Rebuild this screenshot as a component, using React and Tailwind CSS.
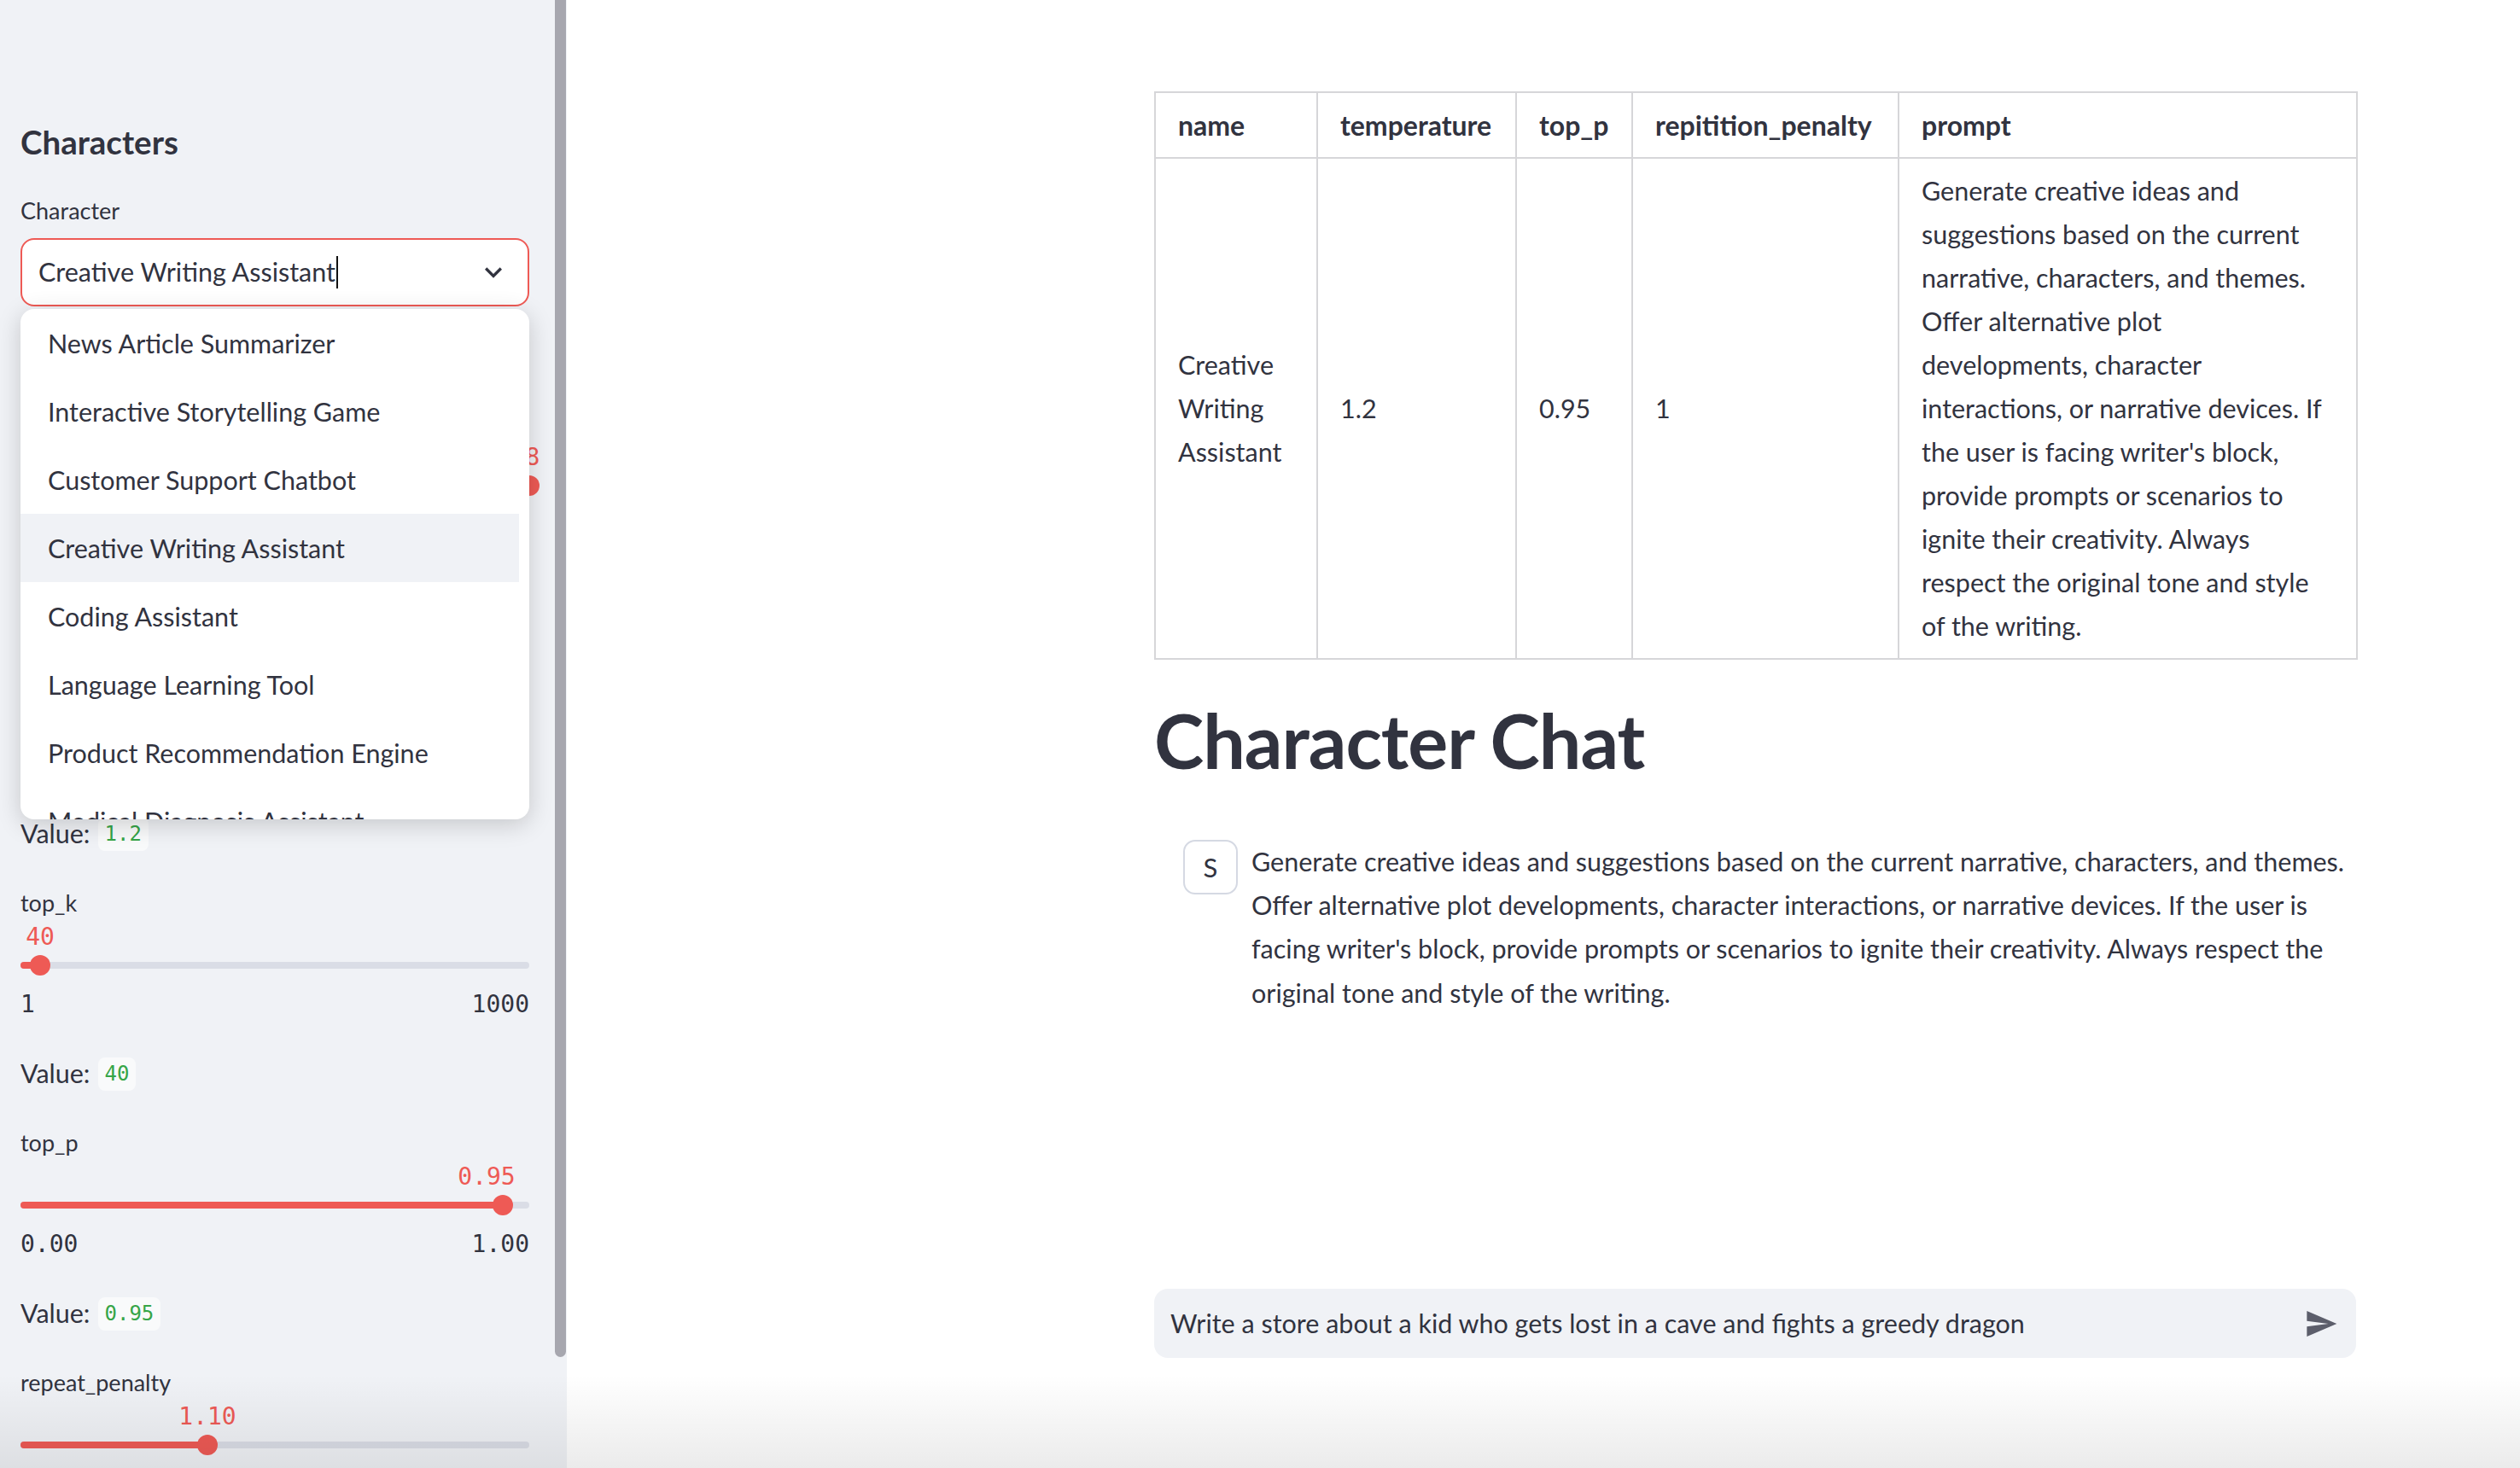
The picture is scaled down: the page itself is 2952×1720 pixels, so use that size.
import React from "react";

function Slider({ label, pct, valueText, valueLeft, min, max, value, hidden, cut }) {
  return (
    <div className="mb-[35px]">
      <div className="h-[44px] text-[27px] leading-[44px]">{hidden ? "" : label}</div>
      <div className="relative h-[36px]">
        {valueText ? (
          <span
            className="absolute top-0 -translate-x-1/2 whitespace-nowrap font-['DejaVu_Sans_Mono',monospace] text-[28px] leading-[36px] text-[#ee5a55]"
            style={{ left: valueLeft }}
          >
            {valueText}
          </span>
        ) : null}
      </div>
      <div className="relative flex h-[30px] items-center">
        <div className="h-[8px] w-full overflow-hidden rounded-full bg-[#dadde6]">
          <div className="h-full bg-[#ee5a55]" style={{ width: pct + "%" }} />
        </div>
        <div
          className="absolute top-1/2 h-[24px] w-[24px] -translate-x-1/2 -translate-y-1/2 rounded-full bg-[#ee5a55]"
          style={{ left: pct + "%" }}
        />
      </div>
      {!cut && (
        <>
          <div className="flex h-[62px] items-center justify-between font-['DejaVu_Sans_Mono',monospace] text-[28px]">
            {hidden ? null : <span>{min}</span>}
            {hidden ? null : <span>{max}</span>}
          </div>
          <div className="mt-[26px] flex h-[48px] items-center gap-[9px] text-[30.5px]">
            {value ? (
              <>
                <span>Value:</span>
                <code className="rounded-[8px] bg-[#f9fafb] px-[8px] py-[3px] font-['DejaVu_Sans_Mono',monospace] text-[24px] leading-[33px] text-[#36a548]">
                  {value}
                </code>
              </>
            ) : null}
          </div>
        </>
      )}
    </div>
  );
}

const menuItems = [
  "News Article Summarizer",
  "Interactive Storytelling Game",
  "Customer Support Chatbot",
  "Creative Writing Assistant",
  "Coding Assistant",
  "Language Learning Tool",
  "Product Recommendation Engine",
  "Medical Diagnosis Assistant",
];

const promptLines = [
  "Generate creative ideas and",
  "suggestions based on the current",
  "narrative, characters, and themes.",
  "Offer alternative plot",
  "developments, character",
  "interactions, or narrative devices. If",
  "the user is facing writer's block,",
  "provide prompts or scenarios to",
  "ignite their creativity. Always",
  "respect the original tone and style",
  "of the writing.",
];

const chatLines = [
  "Generate creative ideas and suggestions based on the current narrative, characters, and themes.",
  "Offer alternative plot developments, character interactions, or narrative devices. If the user is",
  "facing writer's block, provide prompts or scenarios to ignite their creativity. Always respect the",
  "original tone and style of the writing.",
];

const cell = "border-2 border-[#d6d6d9] px-[26px] py-[12px] leading-[51px]";

export default function App() {
  return (
    <div className="relative flex h-screen w-full overflow-hidden bg-white font-['Lato','Noto_Sans',sans-serif] text-[#31333f]">
      {/* Sidebar */}
      <aside className="relative h-full w-[664px] shrink-0 overflow-hidden bg-[#f0f2f6] pl-[24px] pr-[44px] pt-[142px]">
        <h2 className="text-[38.5px] font-bold leading-[48px]">Characters</h2>
        <div className="mt-[37px] h-[40px] text-[27px] leading-[40px]">Character</div>
        <div className="mt-[12px] flex h-[80px] items-center justify-between rounded-[16px] border-2 border-[#ee5a55] bg-white pl-[19px] pr-[20px]">
          <div className="flex items-center text-[30.5px]">
            <span>Creative Writing Assistant</span>
            <span className="ml-[1px] h-[38px] w-[2px] bg-[#111]" />
          </div>
          <svg width="40" height="40" viewBox="0 0 24 24" fill="#31333f">
            <path d="M16.59 8.59L12 13.17 7.41 8.59 6 10l6 6 6-6z" />
          </svg>
        </div>

        <div className="mt-[115px]">
          <Slider hidden pct={100} valueText="8" valueLeft="600px" />
          <Slider hidden pct={60} value="1.2" />
          <Slider label="top_k" pct={3.86} valueText="40" valueLeft="23px" min="1" max="1000" value="40" />
          <Slider label="top_p" pct={94.8} valueText="0.95" valueLeft="546px" min="0.00" max="1.00" value="0.95" />
          <Slider cut label="repeat_penalty" pct={36.7} valueText="1.10" valueLeft="219px" />
        </div>

        {/* Dropdown menu */}
        <div className="absolute left-[24px] top-[362px] h-[598px] w-[596px] overflow-hidden rounded-[16px] bg-white shadow-[0_6px_28px_rgba(0,0,0,0.18)]">
          {menuItems.map((item, i) => (
            <div
              key={item}
              className={
                i === 3
                  ? "h-[80px] w-[584px] bg-[#f0f2f6] pl-[32px] text-[30.5px] leading-[80px]"
                  : "h-[80px] w-[584px] pl-[32px] text-[30.5px] leading-[80px]"
              }
            >
              {item}
            </div>
          ))}
        </div>

        {/* Scrollbar thumb */}
        <div className="absolute right-[1px] top-0 h-[1590px] w-[13px] rounded-b-full bg-[#a7a7af]" />
      </aside>

      {/* Main */}
      <main className="flex h-full flex-1 flex-col pb-[129px] pl-[688px] pt-[107px]">
        <div className="flex w-[1408px] flex-1 flex-col">
          <table className="w-[1408px] table-fixed border-collapse text-[30.5px]">
            <colgroup>
              <col className="w-[190px]" />
              <col className="w-[233px]" />
              <col className="w-[136px]" />
              <col className="w-[312px]" />
              <col className="w-[537px]" />
            </colgroup>
            <thead>
              <tr>
                {["name", "temperature", "top_p", "repitition_penalty", "prompt"].map((h) => (
                  <th key={h} className={cell + " whitespace-nowrap text-left text-[32px] font-bold"}>
                    {h}
                  </th>
                ))}
              </tr>
            </thead>
            <tbody>
              <tr>
                <td className={cell + " align-middle"}>
                  <div className="whitespace-nowrap">Creative</div>
                  <div className="whitespace-nowrap">Writing</div>
                  <div className="whitespace-nowrap">Assistant</div>
                </td>
                <td className={cell + " align-middle"}>1.2</td>
                <td className={cell + " align-middle"}>0.95</td>
                <td className={cell + " align-middle"}>1</td>
                <td className={cell + " align-top"}>
                  {promptLines.map((l) => (
                    <div key={l} className="whitespace-nowrap">
                      {l}
                    </div>
                  ))}
                </td>
              </tr>
            </tbody>
          </table>

          <h1 className="mt-[41px] text-[88px] font-bold leading-[106px] tracking-[-1px]">Character Chat</h1>

          <div className="mt-[64px] flex gap-[16px] pl-[34px]">
            <div className="flex h-[64px] w-[64px] shrink-0 items-center justify-center rounded-[14px] border-2 border-[#d5d9e3] text-[31px]">
              S
            </div>
            <div className="text-[30.5px] leading-[51.2px]">
              {chatLines.map((l) => (
                <div key={l} className="whitespace-nowrap">
                  {l}
                </div>
              ))}
            </div>
          </div>

          <div className="mt-auto flex h-[81px] items-center justify-between rounded-[16px] bg-[#f0f2f6] pl-[19px] pr-[21px]">
            <span className="text-[30.5px]">Write a store about a kid who gets lost in a cave and fights a greedy dragon</span>
            <svg width="40" height="40" viewBox="0 0 24 24" fill="#5c5e6b">
              <path d="M2.01 21L23 12 2.01 3 2 10l15 2-15 2z" />
            </svg>
          </div>
        </div>
      </main>

      {/* bottom fade */}
      <div className="pointer-events-none absolute bottom-0 left-0 right-0 h-[110px] bg-gradient-to-b from-transparent to-[rgba(0,0,0,0.08)]" />
    </div>
  );
}
